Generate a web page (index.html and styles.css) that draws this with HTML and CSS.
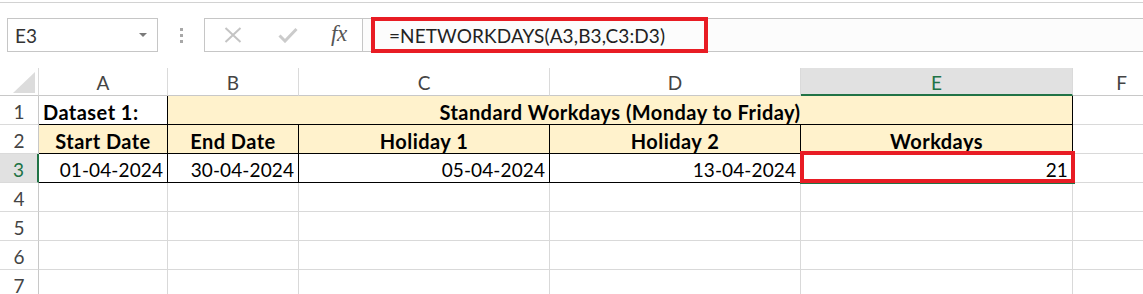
FILE: index.html
```html
<!DOCTYPE html>
<html>
<head>
<meta charset="utf-8">
<link rel="stylesheet" href="styles.css">
</head>
<body>
<div class="app">
  <div class="topline"></div>
  <div class="fbar">
    <div class="namebox"><span class="ref">E3</span><span class="caret"></span></div>
    <div class="grip"><i></i><i></i><i></i></div>
    <div class="btns">
      <svg class="ico" width="18" height="16" viewBox="0 0 18 16"><path d="M1.5 1 L16.5 15 M16.5 1 L1.5 15" stroke="#c4c4c4" stroke-width="2" fill="none"/></svg>
      <svg class="ico" width="20" height="16" viewBox="0 0 20 16"><path d="M1.5 8.5 L7 14 L18.5 2" stroke="#cbcbcb" stroke-width="3" fill="none"/></svg>
      <span class="fx">fx</span>
    </div>
    <div class="formula">
      <span class="ftext">=NETWORKDAYS(A3,B3,C3:D3)</span>
      <div class="annot"></div>
    </div>
  </div>

  <div class="sheet">
    <!-- header row -->
    <div class="hd corner"><svg width="22" height="21" viewBox="0 0 22 21"><polygon points="22,0 22,21 0,21" fill="#dcdcdc"/></svg></div>
    <div class="hd col">A</div>
    <div class="hd col">B</div>
    <div class="hd col">C</div>
    <div class="hd col">D</div>
    <div class="hd col sel">E</div>
    <div class="hd col">F</div>

    <!-- row 1 -->
    <div class="rh">1</div>
    <div class="c b lft bR bB">Dataset 1:</div>
    <div class="c b fill ctr span4 bR bB">Standard Workdays (Monday to Friday)</div>
    <div class="c"></div>

    <!-- row 2 -->
    <div class="rh">2</div>
    <div class="c b fill ctr bR bB">Start Date</div>
    <div class="c b fill ctr bR bB">End Date</div>
    <div class="c b fill ctr bR bB">Holiday 1</div>
    <div class="c b fill ctr bR bB">Holiday 2</div>
    <div class="c b fill ctr bR bB">Workdays</div>
    <div class="c"></div>

    <!-- row 3 -->
    <div class="rh sel">3</div>
    <div class="c num bR bB">01-04-2024</div>
    <div class="c num bR bB">30-04-2024</div>
    <div class="c num bR bB">05-04-2024</div>
    <div class="c num bR bB">13-04-2024</div>
    <div class="c num bR bB active">21<div class="mark"></div></div>
    <div class="c"></div>

    <!-- rows 4-7 -->
    <div class="rh">4</div><div class="c"></div><div class="c"></div><div class="c"></div><div class="c"></div><div class="c"></div><div class="c"></div>
    <div class="rh">5</div><div class="c"></div><div class="c"></div><div class="c"></div><div class="c"></div><div class="c"></div><div class="c"></div>
    <div class="rh">6</div><div class="c"></div><div class="c"></div><div class="c"></div><div class="c"></div><div class="c"></div><div class="c"></div>
    <div class="rh">7</div><div class="c"></div><div class="c"></div><div class="c"></div><div class="c"></div><div class="c"></div><div class="c"></div>
  </div>
</div>
</body>
</html>
```

FILE: styles.css
```css
* { box-sizing: border-box; }
html, body { margin: 0; padding: 0; background: #fff; }
body { font-family: Lato, "Liberation Sans", sans-serif; overflow: hidden; }
.app { width: 1143px; height: 294px; overflow: hidden; }

.topline { margin-top: 2px; height: 1px; background: #d2d2d2; }

.fbar { margin-top: 15px; height: 34px; display: flex; }
.namebox {
  margin-left: 7px; width: 151px; height: 34px;
  border: 1px solid #c6c6c6; background: #fff;
  display: flex; align-items: center; justify-content: space-between;
  padding: 0 10px 0 7px;
}
.ref { font-size: 19px; color: #333; }
.caret { width: 0; height: 0; border-left: 4px solid transparent; border-right: 4px solid transparent; border-top: 4px solid #7a7a7a; }

.grip { width: 46px; display: flex; flex-direction: column; align-items: center; justify-content: center; gap: 3px; }
.grip i { display: block; width: 3px; height: 3px; background: #a8a8a8; }

.btns {
  width: 159px; height: 34px; border: 1px solid #c6c6c6; background: #fff;
  display: flex; align-items: center; padding-left: 19px;
}
.btns .ico:first-child { margin-right: 36px; }
.btns .ico:nth-child(2) { margin-right: 33px; }
.fx { font-family: "Liberation Serif", serif; font-style: italic; font-size: 23px; color: #555; letter-spacing: -0.5px; margin-top: -3px; }

.formula {
  flex: 1; position: relative; height: 34px;
  border-top: 1px solid #c6c6c6; border-bottom: 1px solid #c6c6c6; background: #fcfcfc;
  display: flex; align-items: center; padding-left: 26px;
}
.ftext { font-size: 19px; letter-spacing: 0.1px; color: #222; }
.annot {
  position: absolute; left: 8px; top: -2px; width: 337px; height: 36px;
  border: 4px solid #e81c24;
}

.sheet {
  margin-top: 16px;
  display: grid;
  grid-template-columns: 39px 129px 131px 251px 251px 272px 98px;
  grid-template-rows: 28px repeat(7, 29px);
}
.hd {
  border-right: 1px solid #dadada; border-bottom: 1px solid #c8c8c8;
  color: #444; font-size: 19px; text-align: center; line-height: 20px; padding-top: 5px; background: #fff;
}
.hd.corner { display: flex; align-items: flex-end; justify-content: flex-end; padding: 0 3px 2px 0; }
.hd.sel { background: #e1e1e1; border-bottom: 2px solid #217346; color: #217346; }

.rh {
  border-right: 1px solid #c8c8c8; border-bottom: 1px solid #dadada;
  color: #444; font-size: 19px; text-align: center; line-height: 20px; padding-top: 6px;
}
.rh.sel { background: #e1e1e1; border-right: 2px solid #217346; color: #217346; }

.c {
  border-right: 1px solid #d9d9d9; border-bottom: 1px solid #d9d9d9;
  font-size: 19px; letter-spacing: 0.1px; line-height: 20px; color: #000;
  display: flex; align-items: flex-end; padding: 0 4px 2px 4px;
  white-space: nowrap;
}
.c.b { font-weight: bold; font-size: 20px; letter-spacing: 0.45px; }
.c.fill { background: #fff2cc; }
.c.ctr { justify-content: center; }
.c.lft { justify-content: flex-start; }
.c.num { justify-content: flex-end; }
.c.span4 { grid-column: span 4; }
.c.bR { border-right-color: #000; }
.c.bB { border-bottom-color: #000; }
.c.active { position: relative; }
.mark {
  position: absolute; left: -1px; top: -3px; right: -3px; bottom: -1px;
  border: 4px solid #e81c24;
  box-shadow: 0 1px 0 #217346;
}
```
